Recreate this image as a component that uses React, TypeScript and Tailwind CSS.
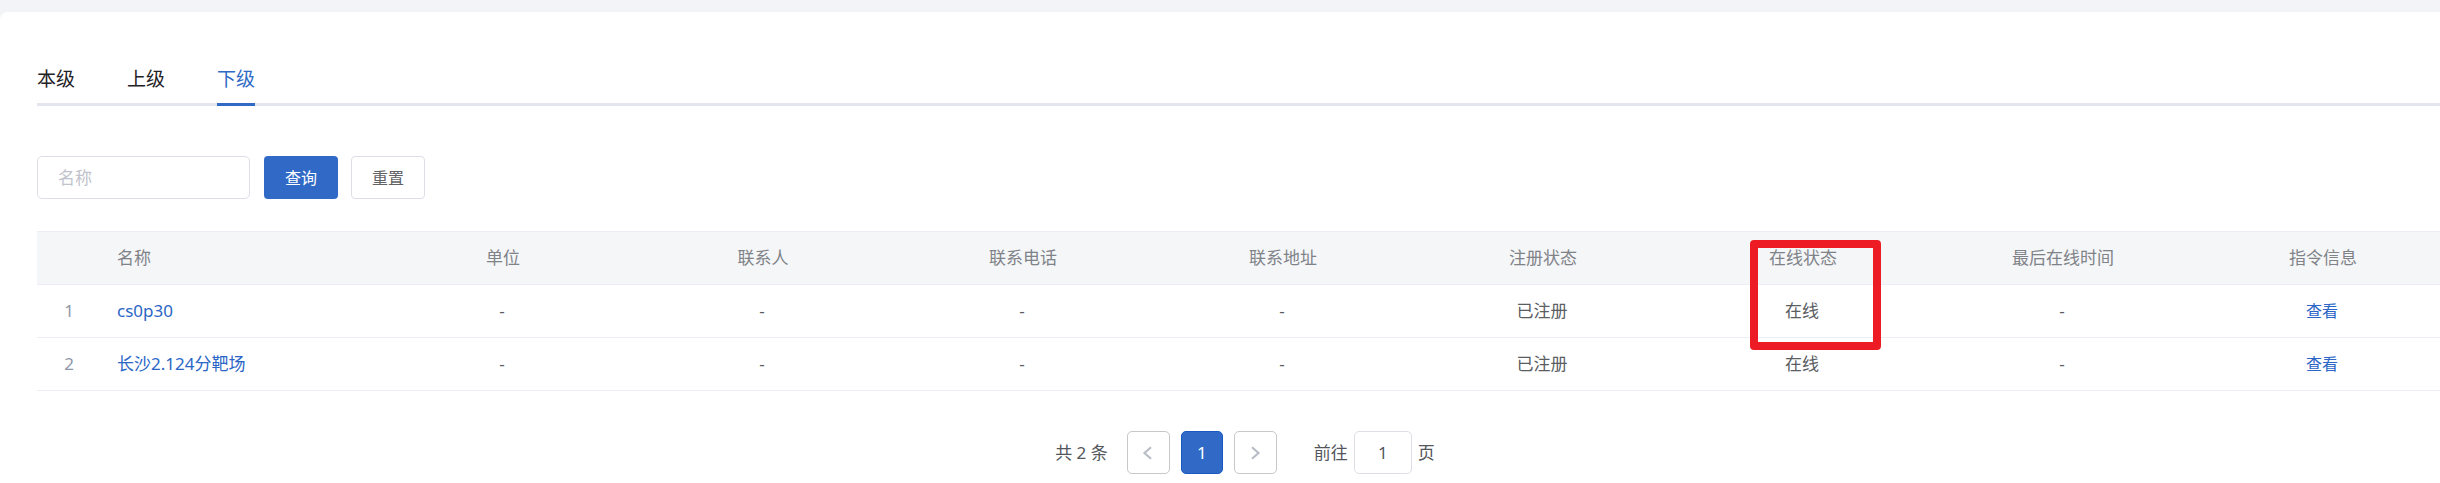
import { useState } from 'react';
import type { ReactNode } from 'react';

const tabs = ['本级', '上级', '下级'];

const columns = ['单位', '联系人', '联系电话', '联系地址', '注册状态', '在线状态', '最后在线时间', '指令信息'];

const rows = [
  { id: 1, name: 'cs0p30', cells: ['-', '-', '-', '-', '已注册', '在线', '-'] },
  { id: 2, name: '长沙2.124分靶场', cells: ['-', '-', '-', '-', '已注册', '在线', '-'] },
];

function Tabs() {
  const [active, setActive] = useState('下级');
  return (
    <div role="tablist" className="flex h-[52px] gap-[52px] border-b-[3px] border-[#e4e6ef]">
      {tabs.map((tab) => (
        <button
          key={tab}
          type="button"
          role="tab"
          aria-selected={tab === active}
          onClick={() => setActive(tab)}
          className={
            tab === active
              ? '-mb-[3px] flex h-[52px] items-start border-b-[3px] border-[#306ac6] pt-[13px] text-[19px] leading-6 text-[#306ac6]'
              : 'flex h-[49px] items-start pt-[13px] text-[19px] leading-6 text-[#1f2227]'
          }
        >
          {tab}
        </button>
      ))}
    </div>
  );
}

function SearchBar() {
  return (
    <form className="flex items-center" onSubmit={(e) => e.preventDefault()}>
      <input
        type="text"
        aria-label="名称"
        placeholder="名称"
        className="h-[43px] w-[213px] rounded-[5px] border border-[#dcdfe6] px-5 text-[17px] text-[#606266] outline-none placeholder:text-[#bfc3cb]"
      />
      <button type="submit" className="ml-[14px] h-[43px] w-[74px] rounded-[4px] bg-[#306ac6] text-base text-white">
        查询
      </button>
      <button
        type="reset"
        className="ml-[13px] h-[43px] w-[74px] rounded-[4px] border border-[#dcdfe6] bg-white text-base text-[#606266]"
      >
        重置
      </button>
    </form>
  );
}

function Highlight() {
  return (
    <span
      aria-hidden="true"
      className="pointer-events-none absolute top-2 left-1/2 -ml-[53px] h-[110px] w-[131px] rounded-[4px] border-8 border-[#ed1c24]"
    />
  );
}

function DataTable() {
  return (
    <table className="w-full table-fixed border-separate border-spacing-0 text-[17px] leading-6">
      <colgroup>
        <col className="w-[64px]" />
        <col className="w-[272px]" />
        {columns.map((c) => (
          <col key={c} />
        ))}
      </colgroup>
      <thead>
        <tr className="h-[54px] text-[#7f8388]">
          <th className="border-y border-[#ebeef5] bg-[#f5f6f8]" aria-label="序号" />
          <th className="border-y border-[#ebeef5] bg-[#f5f6f8] px-4 text-left font-normal">名称</th>
          {columns.map((c) => (
            <th key={c} className="relative border-y border-[#ebeef5] bg-[#f5f6f8] text-center font-normal">
              {c}
              {c === '在线状态' && <Highlight />}
            </th>
          ))}
        </tr>
      </thead>
      <tbody>
        {rows.map((row) => (
          <tr key={row.id} className="h-[53px] text-[#5a5d62]">
            <td className="border-b border-[#ebeef5] text-center text-[#8f97a8]">{row.id}</td>
            <td className="border-b border-[#ebeef5] px-4">
              <a href="#detail" className="text-[#2b66c6]">
                {row.name}
              </a>
            </td>
            {row.cells.map((cell, i) => (
              <td key={columns[i]} className="border-b border-[#ebeef5] pr-[2px] text-center">
                {cell}
              </td>
            ))}
            <td className="border-b border-[#ebeef5] pr-[2px] text-center">
              <a href="#view" className="text-base text-[#2b66c6]">
                查看
              </a>
            </td>
          </tr>
        ))}
      </tbody>
    </table>
  );
}

function Arrow({ children }: { children: ReactNode }) {
  return (
    <svg
      viewBox="0 0 16 16"
      className="size-4"
      fill="none"
      stroke="#b9bdc5"
      strokeWidth="2.2"
      aria-hidden="true"
    >
      {children}
    </svg>
  );
}

function Pagination() {
  return (
    <nav className="flex items-center justify-center text-[17px] text-[#53565c]">
      <span className="mr-[19px]">共 2 条</span>
      <div className="flex gap-[11px]">
        <button
          type="button"
          aria-label="上一页"
          className="flex size-[43px] items-center justify-center rounded-[5px] border border-[#c6c8cc] bg-white"
        >
          <Arrow>
            <path d="M11 2.2L4.5 8L11 13.8" />
          </Arrow>
        </button>
        <button
          type="button"
          className="h-[43px] w-[42px] rounded-[5px] border border-[#1859c2] bg-[#306ac6] text-white"
        >
          1
        </button>
        <button
          type="button"
          aria-label="下一页"
          className="flex size-[43px] items-center justify-center rounded-[5px] border border-[#c6c8cc] bg-white"
        >
          <Arrow>
            <path d="M5 2.2L11.5 8L5 13.8" />
          </Arrow>
        </button>
      </div>
      <label className="ml-[37px] flex items-center gap-[6px]">
        前往
        <input
          type="text"
          defaultValue="1"
          className="h-[43px] w-[58px] rounded-[5px] border border-[#dcdfe6] text-center text-[#53565c] outline-none"
        />
        页
      </label>
    </nav>
  );
}

export default function App() {
  return (
    <div className="flex min-h-screen flex-col overflow-hidden bg-[#f3f4f8] pt-3 font-['Noto_Sans','Noto_Sans_CJK_SC',sans-serif]">
      <main className="-mr-[13px] flex-1 rounded-tl-lg bg-white pt-[42px] pl-[37px]">
        <Tabs />
        <div className="mt-[50px]">
          <SearchBar />
        </div>
        <div className="mt-8">
          <DataTable />
        </div>
        <div className="mt-10">
          <Pagination />
        </div>
      </main>
    </div>
  );
}
